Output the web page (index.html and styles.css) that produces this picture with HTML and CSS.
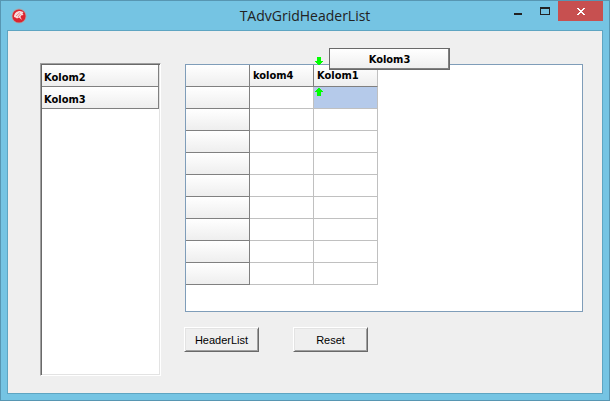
FILE: index.html
```html
<!DOCTYPE html>
<html lang="en">
<head>
    <meta charset="UTF-8">
    <meta name="viewport" content="width=device-width, initial-scale=1.0">
    <title>TAdvGridHeaderList</title>
    <link rel="stylesheet" href="styles.css">
</head>
<body>
    <div class="window">
        <header class="titlebar">
            <svg class="app-icon" width="16" height="16" viewBox="0 0 16 16" aria-hidden="true">
                <circle cx="8" cy="8" r="7.5" fill="#a9a5a8"/>
                <circle cx="8" cy="8" r="6.6" fill="#dc2430"/>
                <path d="M3 9C3 5 6 3 9 3L12.500 4L11.500 5.500L12.500 7L10 7.500L9.500 9L11 12L8 9.500L6 10.500L4.500 9.500Z" fill="#f9dcdd"/>
                <path d="M5 8L9 4.500M7 9L9.500 6" stroke="#dc2430" stroke-width=".5" fill="none"/>
            </svg>
            <h1 class="title">TAdvGridHeaderList</h1>
            <div class="controls">
                <button class="control" type="button" aria-label="Minimize">
                    <svg width="8" height="8" viewBox="0 0 8 8"><path d="M0 6h8v2H0z" fill="#222"/></svg>
                </button>
                <button class="control" type="button" aria-label="Maximize">
                    <svg width="10" height="8" viewBox="0 0 10 8"><path d="M0 0h10v8H0zM1 2v5h8V2z" fill="#222" fill-rule="evenodd"/></svg>
                </button>
                <button class="control close" type="button" aria-label="Close">
                    <svg width="8" height="7" viewBox="0 0 8 7" shape-rendering="crispEdges"><path d="M0 0h2v1h1v1h2V1h1V0h2v1H7v1H6v1H5v1h1v1h1v1h1v1H6V6H5V5H3v1H2v1H0V6h1V5h1V4h1V3H2V2H1V1H0z" fill="#fff"/></svg>
                </button>
            </div>
        </header>

        <main class="client">
            <ul class="header-list">
                <li class="header-item">Kolom2</li>
                <li class="header-item">Kolom3</li>
            </ul>

            <div class="pane">
                <div class="grid-box">
                    <table class="grid">
                        <thead>
                            <tr>
                                <th></th>
                                <th>kolom4</th>
                                <th class="drop-target">
                                    Kolom1
                                    <svg class="arrow arrow-down" width="8" height="8" viewBox="0 0 8 8" shape-rendering="crispEdges"><path d="M2 0h4v4h2v1H7v1H6v1H5v1H3V7H2V6H1V5H0V4h2z" fill="#0f0"/></svg>
                                    <svg class="arrow arrow-up" width="8" height="8" viewBox="0 0 8 8" shape-rendering="crispEdges"><path d="M3 0h2v1h1v1h1v1h1v1H6v4H2V4H0V3h1V2h1V1h1z" fill="#0f0"/></svg>
                                    <span class="dragged">Kolom3</span>
                                </th>
                            </tr>
                        </thead>
                        <tbody>
                            <tr><th></th><td></td><td class="selected"></td></tr>
                            <tr><th></th><td></td><td></td></tr>
                            <tr><th></th><td></td><td></td></tr>
                            <tr><th></th><td></td><td></td></tr>
                            <tr><th></th><td></td><td></td></tr>
                            <tr><th></th><td></td><td></td></tr>
                            <tr><th></th><td></td><td></td></tr>
                            <tr><th></th><td></td><td></td></tr>
                            <tr><th></th><td></td><td></td></tr>
                        </tbody>
                    </table>
                </div>
                <div class="buttons">
                    <button class="btn" type="button">HeaderList</button>
                    <button class="btn" type="button">Reset</button>
                </div>
            </div>
        </main>
    </div>
</body>
</html>
```
FILE: styles.css
```css
* {
    box-sizing: border-box;
}
body {
    margin: 0;
    font: 11px "Liberation Sans", Arial, sans-serif;
    color: #000;
}

/* Window frame */
.window {
    display: flex;
    flex-direction: column;
    height: 100vh;
    padding: 0 6px 6px;
    border: 1px solid #5796b2;
    background: #75c4e3;
}
.titlebar {
    display: grid;
    grid-template-columns: 1fr auto 1fr;
    align-items: start;
    height: 29px;
}
.app-icon {
    margin: 7px 0 0 4px;
}
.title {
    margin: 0;
    font: 14px/30px "Open Sans", "Segoe UI", sans-serif;
    color: #222;
}
.controls {
    display: flex;
    justify-content: flex-end;
}
.control {
    display: flex;
    align-items: center;
    justify-content: center;
    width: 27px;
    height: 20px;
    padding: 0;
    border: 0;
    background: none;
}
.control.close {
    width: 45px;
    background: #c75050;
}
.client {
    display: flex;
    flex: 1;
    gap: 23px;
    min-height: 0;
    padding: 32px 19px 17px 32px;
    border: 1px solid #5ea5c2;
    background: #efefef;
}

/* Column list */
.header-list {
    width: 121px;
    margin: 0;
    padding: 1px;
    list-style: none;
    background: #fff;
    border: 1px solid;
    border-color: #a0a0a0 #fff #fff #a0a0a0;
    box-shadow: inset 1px 1px #696969, inset -1px -1px #e3e3e3;
}
.header-item,
.grid th,
.dragged {
    font: bold 11px/21px "DejaVu Sans Condensed", Tahoma, sans-serif;
    background: linear-gradient(#fff, #eee);
}
.header-item {
    height: 22px;
    padding: 2px 2px 0;
    border: 1px solid #808080;
    border-width: 0 1px 1px 0;
}

/* Grid */
.pane {
    display: flex;
    flex: 1;
    flex-direction: column;
    gap: 15px;
    padding-bottom: 24px;
}
.grid-box {
    flex: 1;
    margin: 1px 0 0 1px;
    border: 1px solid #7f9db9;
    background: #fff;
}
.grid {
    table-layout: fixed;
    width: 192px;
    border-collapse: separate;
    border-spacing: 0;
}
.grid th,
.grid td {
    height: 22px;
    padding: 0 3px;
    text-align: left;
    border: 1px solid #c0c0c0;
    border-width: 0 1px 1px 0;
}
.grid th {
    border-color: #808080;
}
.grid .selected {
    background: #b5caea;
}

/* Header being dragged over the grid */
.grid .drop-target {
    position: relative;
    border-right-color: #c0c0c0;
}
.arrow {
    position: absolute;
    left: 1px;
}
.arrow-down {
    top: -8px;
}
.arrow-up {
    top: 23px;
}
.dragged {
    position: absolute;
    top: -17px;
    left: 15px;
    width: 121px;
    height: 22px;
    text-align: center;
    border: 1px solid #696969;
    box-shadow: inset -1px -1px #808080;
}

/* Buttons */
.buttons {
    display: flex;
    gap: 34px;
}
.btn {
    width: 75px;
    height: 25px;
    padding: 0;
    font: inherit;
    color: #000;
    background: #efefef;
    border: 1px solid;
    border-color: #fff #696969 #696969 #fff;
    box-shadow: inset 1px 1px #e3e3e3, inset -1px -1px #a0a0a0;
}
```
